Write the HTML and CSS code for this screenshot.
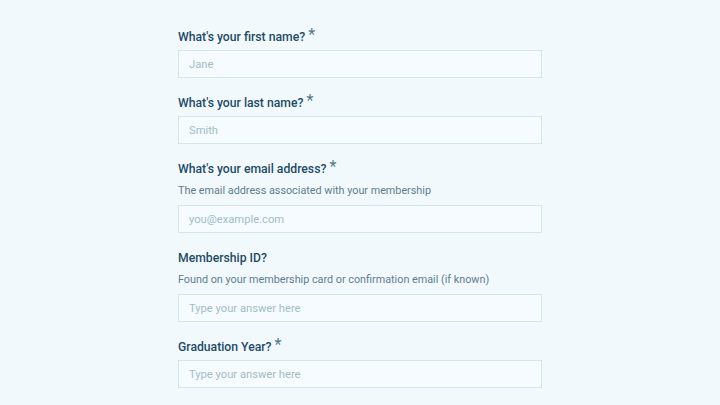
FILE: index.html
```html
<!DOCTYPE html>
<html lang="en">

<head>
    <meta charset="UTF-8">
    <meta name="viewport" content="width=device-width, initial-scale=1.0">
    <title>Member Details</title>
    <link rel="stylesheet" href="styles.css">
</head>

<body>
    <form class="form">
        <div class="field">
            <label for="firstName">What's your first name? <span class="req">*</span></label>
            <input type="text" id="firstName" placeholder="Jane">
        </div>
        <div class="field">
            <label for="lastName">What's your last name? <span class="req">*</span></label>
            <input type="text" id="lastName" placeholder="Smith">
        </div>
        <div class="field">
            <label for="email">What's your email address? <span class="req">*</span></label>
            <p class="hint">The email address associated with your membership</p>
            <input type="email" id="email" placeholder="you@example.com">
        </div>
        <div class="field">
            <label for="memberId">Membership ID?</label>
            <p class="hint">Found on your membership card or confirmation email (if known)</p>
            <input type="text" id="memberId" placeholder="Type your answer here">
        </div>
        <div class="field">
            <label for="gradYear">Graduation Year? <span class="req">*</span></label>
            <input type="text" id="gradYear" placeholder="Type your answer here">
        </div>
    </form>
</body>

</html>
```

FILE: styles.css
```css
body {
    margin: 0;
    padding: 28px 0 0;
    font-family: Roboto, "Liberation Sans", sans-serif;
    background-color: #f2f9fc;
}

.form {
    width: 364px;
    margin: 0 auto;
    display: flex;
    flex-direction: column;
    gap: 16px;
}

.field {
    display: flex;
    flex-direction: column;
    gap: 3px;
}

label {
    font-size: 12.2px;
    line-height: 19px;
    font-weight: 500;
    color: #1d4b67;
}

.req {
    font-size: 16px;
    font-weight: 400;
    color: #4f7891;
    position: relative;
    top: -1px;
    line-height: 0;
}

.hint {
    margin: 0 0 2px;
    font-size: 10.8px;
    line-height: 18px;
    color: #5d7d8f;
}

input {
    box-sizing: border-box;
    width: 100%;
    height: 28px;
    padding: 0 10px;
    font-family: inherit;
    font-size: 11.2px;
    color: #1d4b67;
    background-color: #f5fbfe;
    border: 1px solid #d4e5ec;
    border-radius: 0;
    outline: none;
}

input::placeholder {
    color: #a3bbc7;
}
```
